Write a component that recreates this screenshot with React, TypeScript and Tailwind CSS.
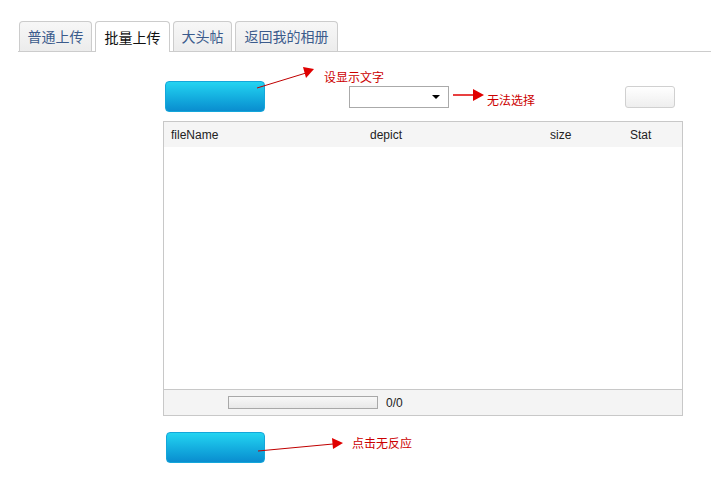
import React from "react";

const tabs = [
  { label: "普通上传", w: "w-[73px]", active: false },
  { label: "批量上传", w: "w-[75px]", active: true },
  { label: "大头帖", w: "w-[59px]", active: false },
  { label: "返回我的相册", w: "w-[103px]", active: false },
];

export default function App() {
  return (
    <div className="relative w-[711px] h-[478px] bg-white overflow-hidden font-['Liberation_Sans','Noto_Sans_CJK_SC',sans-serif]">
      <div className="pl-[18px] pt-[22px]">
        {/* Tabs */}
        <div className="flex items-end gap-[3px] h-[30px] border-b border-[#cccccc] pl-[1px]">
          {tabs.map((t) => (
            <div
              key={t.label}
              className={
                t.active
                  ? `${t.w} h-[31px] -mb-[1px] flex items-center justify-center rounded-t-[4px] border border-b-0 border-[#cccccc] bg-white text-[14px] text-[#111111] font-['Noto_Sans_CJK_SC',sans-serif]`
                  : `${t.w} h-[30px] flex items-center justify-center rounded-t-[4px] border border-b-0 border-[#cccccc] bg-gradient-to-b from-[#f7f7f7] to-[#ececec] text-[14px] text-[#3b5b8c] font-['Noto_Sans_CJK_SC',sans-serif]`
              }
            >
              {t.label}
            </div>
          ))}
        </div>

        {/* Content */}
        <div className="ml-[145px] w-[520px]">
          <div className="flex items-start mt-[29px] h-[31px]">
            <div className="ml-[2px] w-[100px] h-[31px] rounded-[4px] bg-gradient-to-b from-[#24d4f1] to-[#0a8dcf] border border-[#14a6da]" />
            <div className="ml-[84px] mt-[5px] w-[100px] h-[22px] border border-[#aaaaaa] bg-white flex items-center justify-end pr-[8px]">
              <div className="w-0 h-0 border-l-[4px] border-r-[4px] border-t-[4px] border-l-transparent border-r-transparent border-t-black" />
            </div>
            <div className="ml-[176px] mt-[5px] w-[50px] h-[22px] rounded-[3px] border border-[#d0d0d0] bg-gradient-to-b from-[#ffffff] to-[#eeeeee]" />
          </div>

          {/* Table */}
          <div className="mt-[9px] w-[520px] h-[295px] border border-[#c8c8c8] flex flex-col">
            <div className="h-[25px] bg-[#f5f5f5] grid grid-cols-[199px_180px_80px_1fr] items-center text-[12px] text-[#222222]">
              <div className="pl-[7px]">fileName</div>
              <div className="pl-[7px]">depict</div>
              <div className="pl-[7px]">size</div>
              <div className="pl-[7px]">Stat</div>
            </div>
            <div className="flex-1 bg-white" />
            <div className="h-[26px] bg-[#f4f4f4] border-t border-[#c8c8c8] flex items-center pl-[64px]">
              <div className="w-[150px] h-[13px] border border-[#a8a8a8] bg-gradient-to-b from-[#f8f8f8] to-[#e8e8e8]" />
              <div className="ml-[8px] text-[12px] text-[#222222]">0/0</div>
            </div>
          </div>

          <div className="mt-[16px] ml-[3px] w-[99px] h-[31px] rounded-[4px] bg-gradient-to-b from-[#24d4f1] to-[#0a8dcf] border border-[#14a6da]" />
        </div>
      </div>

      {/* Annotations overlay */}
      <svg className="absolute inset-0 pointer-events-none" width="711" height="478" viewBox="0 0 711 478">
        <line x1="257" y1="88" x2="306" y2="73" stroke="#c00000" strokeWidth="1" />
        <polygon points="314,69 303,67 306,78" fill="#e00000" />
        <line x1="453" y1="95" x2="474" y2="95" stroke="#e00000" strokeWidth="1.5" />
        <polygon points="484,95 473,89 473,101" fill="#e00000" />
        <line x1="258" y1="451" x2="333" y2="444" stroke="#c00000" strokeWidth="1" />
        <polygon points="343,443 332,438 333,449" fill="#e00000" />
      </svg>
      <div className="absolute left-[324px] top-[69px] text-[12px] leading-[16px] text-[#cc0000] font-['Noto_Sans_CJK_SC',sans-serif]">设显示文字</div>
      <div className="absolute left-[487px] top-[92px] text-[12px] leading-[16px] text-[#cc0000] font-['Noto_Sans_CJK_SC',sans-serif]">无法选择</div>
      <div className="absolute left-[352px] top-[435px] text-[12px] leading-[16px] text-[#cc0000] font-['Noto_Sans_CJK_SC',sans-serif]">点击无反应</div>
    </div>
  );
}
